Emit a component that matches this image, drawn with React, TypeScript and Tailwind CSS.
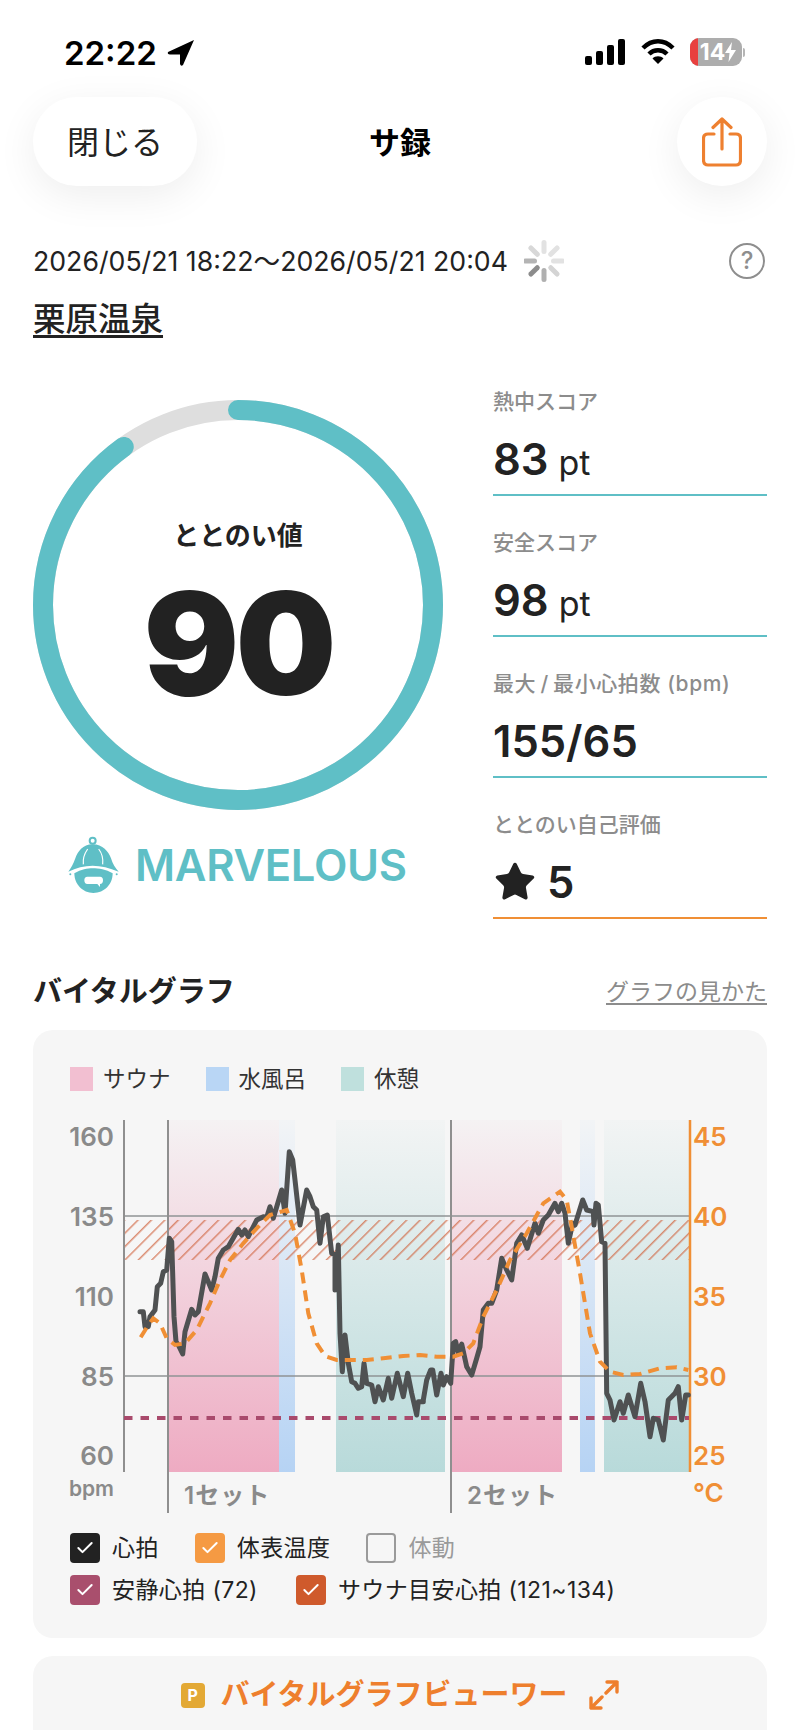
import { Check, Star } from 'lucide-react';

const FONT = "font-['Inter','Noto_Sans_CJK_JP',sans-serif]";
const TEAL = '#5fbfc6';

// traced from the graph, in 3x units relative to (50,1100) and (420,1100)
const HR_A = '270,635 280,635 285,680 295,680 300,650 315,630 322,560 332,550 340,515 350,510 358,415 365,425 372,650 378,725 385,735 398,762 405,695 425,628 435,645 445,635 465,522 485,570 495,530 505,475 520,450 535,440 565,388 575,405 585,390 595,410 620,360 640,350 650,352 660,320 670,355 695,270 705,340 718,155 728,180 735,240 750,375 770,270 780,290 790,320 800,330 810,430 820,350 832,345 845,460 855,465 855,570 865,435 870,700 877,815 885,705 895,790 905,845 915,850 925,865 935,860 942,790 950,850 965,855 975,905 985,860 1000,900 1015,835 1025,895 1042,820 1060,890 1073,820 1085,880 1100,945 1105,905 1120,905';
const HR_B = '10,900 20,840 32,810 38,810 50,885 63,820 70,855 80,830 92,850 100,730 107,725 115,760 125,732 140,800 155,825 170,775 180,740 190,630 205,610 215,610 230,570 245,475 260,510 275,540 290,430 305,405 322,445 345,370 355,400 370,360 385,345 405,310 415,335 425,310 435,340 445,430 458,370 465,375 488,300 500,330 520,335 522,375 528,310 535,315 545,425 555,430 560,880 570,900 582,960 600,905 610,940 625,885 645,950 662,850 675,905 690,1010 700,955 715,960 730,1020 745,900 765,880 775,860 785,960 797,885 805,885';
const TEMP_A = '272,712 295,675 310,655 330,670 350,715 375,735 405,730 440,690 480,610 510,540 540,480 580,430 620,385 660,345 710,330 735,400 755,510 775,640 800,730 825,768 860,780 900,780 950,780 1000,775 1060,768 1110,765';
const TEMP_B = '50,770 100,770 130,760 160,730 190,650 230,570 270,480 320,400 370,310 420,275 440,300 455,380 480,520 510,700 540,785 570,815 610,825 660,822 720,805 770,802 805,810';

function toPage(a: string, b: string) {
  const conv = (s: string, ox: number) =>
    s.split(' ').map((p) => {
      const [x, y] = p.split(',').map(Number);
      return `${(ox + x / 3).toFixed(1)},${(1100 + y / 3).toFixed(1)}`;
    });
  return [...conv(a, 50), ...conv(b, 420)].join(' ');
}

function StatusBar() {
  return (
    <div className="flex h-[97px] items-start justify-between pl-[64px] pr-[55px] pt-[33px]">
      <div className="flex items-center gap-[10px]">
        <span className="text-[33px] leading-[40px] font-semibold text-black">22:22</span>
        <svg width="28" height="28" viewBox="0 0 28 28">
          <path d="M27 1 L1 13 Q0 15 3 15.500 L13 15.500 L13 25 Q14 28 16 26 Z" fill="#000" />
        </svg>
      </div>
      <div className="mt-[5px] flex items-center">
        <svg width="40" height="26" viewBox="0 0 40 26" fill="#000">
          <rect x="0" y="17" width="7" height="9" rx="2" />
          <rect x="11" y="12" width="7" height="14" rx="2" />
          <rect x="22" y="6" width="7" height="20" rx="2" />
          <rect x="33" y="0" width="7" height="26" rx="2" />
        </svg>
        <svg className="ml-[16px]" width="34" height="26" viewBox="0 0 34 26" fill="none" stroke="#000" strokeWidth="4.500">
          <path d="M2 9 C11 0 23 0 32 9" />
          <path d="M8 15 C13 10 21 10 26 15" />
          <path d="M17 25 L11.500 19.500 C14 16.500 20 16.500 22.500 19.500 Z" fill="#000" stroke="none" />
        </svg>
        <div className="ml-[15px] flex items-center">
          <div className="relative flex h-[28px] w-[52px] items-center justify-center overflow-hidden rounded-[9px] bg-[#adadad]">
            <div className="absolute top-0 bottom-0 left-0 w-[8px] bg-[#e8403f]" />
            <span className="relative pl-[4px] text-[23px] leading-none font-bold text-white">14</span>
            <svg className="relative" width="11" height="20" viewBox="0 0 11 20" fill="#fff">
              <path d="M7 0 L0 11 L4.500 11 L3.500 20 L11 8 L6 8 Z" />
            </svg>
          </div>
          <div className="ml-[1px] h-[9px] w-[2px] rounded-r-sm bg-[#b5b5b5]" />
        </div>
      </div>
    </div>
  );
}

function Header() {
  return (
    <div className="flex h-[89px] items-center px-[33px]">
      <div className="flex-1">
        <div className="flex h-[89px] w-[164px] items-center justify-center rounded-[44px] bg-white pt-[3px] text-[32px] text-[#222] shadow-[0_10px_40px_rgba(0,0,0,0.07)]">
          閉じる
        </div>
      </div>
      <div className="pt-[3px] text-[31px] font-bold text-black">サ録</div>
      <div className="flex flex-1 justify-end">
        <div className="flex h-[89px] w-[90px] items-center justify-center rounded-full bg-white shadow-[0_10px_40px_rgba(0,0,0,0.07)]">
          <svg width="40" height="50" viewBox="0 0 40 50" fill="none" stroke="#ee8030" strokeWidth="3.200" strokeLinecap="round" strokeLinejoin="round">
            <path d="M12 17 H6 Q1.500 17 1.500 21.500 V43 Q1.500 48 6 48 H34 Q38.500 48 38.500 43 V21.500 Q38.500 17 34 17 H28" />
            <path d="M20 32 V2 M11 10.500 L20 2 L29 10.500" />
          </svg>
        </div>
      </div>
    </div>
  );
}

function Spinner() {
  const shades = ['#e2e2e2', '#e2e2e2', '#e2e2e2', '#d4d4d4', '#b0b0b0', '#8c8c8c', '#b4b4b4', '#d8d8d8'];
  return (
    <svg width="40" height="42" viewBox="-20 -21 40 42">
      {shades.map((c, i) => (
        <rect key={i} x="-2.500" y="-21" width="5" height="14" rx="2.500" fill={c} transform={`rotate(${i * 45})`} />
      ))}
    </svg>
  );
}

function HatIcon() {
  return (
    <svg width="55" height="60" viewBox="20 30 165 180" fill={TEAL}>
      <circle cx="100" cy="47" r="9" fill="none" stroke={TEAL} strokeWidth="6" />
      <path d="M100 58 C70 58 55 80 48 100 C42 118 35 128 27 140 C50 128 75 122 100 122 C125 122 150 128 178 140 C168 128 160 118 155 100 C148 80 130 58 100 58 Z" />
      <path d="M72 118 C70 100 76 85 85 72 M130 118 C132 100 128 85 118 72" fill="none" stroke="#fff" strokeWidth="3.500" />
      <path d="M45 145 C65 133 85 130 100 130 C118 130 140 133 160 145 C160 178 135 204 102 204 C70 204 45 178 45 145 Z" />
      <circle cx="33" cy="148" r="3" />
      <circle cx="172" cy="148" r="3" />
      <path d="M84 155 H122 Q131 155 131 166 Q131 177 122 177 L122 186 L114 177 H84 Q75 177 75 166 Q75 155 84 155 Z" fill="#fff" />
    </svg>
  );
}

function Ring() {
  const r = 195;
  const c = 2 * Math.PI * r;
  return (
    <div className="relative h-[410px] w-[410px]">
      <svg width="410" height="410" viewBox="0 0 410 410" className="-rotate-90">
        <circle cx="205" cy="205" r={r} fill="none" stroke="#dedede" strokeWidth="20" />
        <circle cx="205" cy="205" r={r} fill="none" stroke={TEAL} strokeWidth="20" strokeLinecap="round" strokeDasharray={`${c * 0.9} ${c}`} />
      </svg>
      <div className="absolute inset-0 flex flex-col items-center">
        <div className="mt-[118px] text-[26px] leading-[36px] font-bold text-[#222]">ととのい値</div>
        <div className="mt-[4px] text-[142px] leading-[170px] font-black tracking-[-4px] text-[#222]">90</div>
      </div>
    </div>
  );
}

function Stat({ label, rule, children }: { label: React.ReactNode; rule: string; children: React.ReactNode }) {
  return (
    <div className={`h-[141px] border-b-2 ${rule}`}>
      <div className="pt-[34px] text-[21px] leading-[26px] font-medium text-[#8c8c8c]">{label}</div>
      <div className="mt-[19px] flex h-[50px] items-baseline text-[#222]">{children}</div>
    </div>
  );
}

function Legend({ color, label }: { color: string; label: string }) {
  return (
    <div className="flex items-center gap-[10px]">
      <span className={`h-[24px] w-[23px] ${color}`} />
      <span className="text-[22.500px] leading-[30px] text-[#333]">{label}</span>
    </div>
  );
}

function CheckRow({ color, label, muted }: { color?: string; label: string; muted?: boolean }) {
  return (
    <div className="flex items-center gap-[12px]">
      {color ? (
        <span className={`flex h-[30px] w-[30px] items-center justify-center rounded-[4px] ${color}`}>
          <Check size={20} strokeWidth={2.4} color="#fff" />
        </span>
      ) : (
        <span className="h-[30px] w-[30px] rounded-[4px] border-2 border-[#9a9a9a]" />
      )}
      <span className={`text-[23px] leading-[30px] tracking-[0.4px] ${muted ? 'text-[#9a9a9a]' : 'text-[#222]'}`}>{label}</span>
    </div>
  );
}

function Chart() {
  const bands = [
    { x: 169, w: 110, g: 'url(#sauna)' },
    { x: 279, w: 16, g: 'url(#water)' },
    { x: 336, w: 109, g: 'url(#rest)' },
    { x: 452, w: 110, g: 'url(#sauna)' },
    { x: 580, w: 15, g: 'url(#water)' },
    { x: 604, w: 85, g: 'url(#rest)' },
  ];
  const leftTicks = [['160', 1146], ['135', 1226], ['110', 1306], ['85', 1386], ['60', 1465]];
  const rightTicks = [['45', 1146], ['40', 1226], ['35', 1306], ['30', 1386], ['25', 1465]];
  return (
    <svg width="680" height="400" viewBox="60 1115 680 400" className="block">
      <defs>
        <linearGradient id="sauna" x1="0" y1="0" x2="0" y2="1">
          <stop offset="0" stopColor="#f5f2f3" />
          <stop offset="1" stopColor="#eeabc2" />
        </linearGradient>
        <linearGradient id="water" x1="0" y1="0" x2="0" y2="1">
          <stop offset="0" stopColor="#f2f4f6" />
          <stop offset="1" stopColor="#b6d3f4" />
        </linearGradient>
        <linearGradient id="rest" x1="0" y1="0" x2="0" y2="1">
          <stop offset="0" stopColor="#f2f4f4" />
          <stop offset="1" stopColor="#b8dada" />
        </linearGradient>
        <pattern id="hatch" width="9.500" height="9.500" patternUnits="userSpaceOnUse" patternTransform="rotate(45)">
          <rect x="0" y="0" width="1.500" height="9.500" fill="#d0623c" fillOpacity="0.7" />
        </pattern>
      </defs>
      {bands.map((b, i) => (
        <rect key={i} x={b.x} y="1120" width={b.w} height="352" fill={b.g} />
      ))}
      <rect x="124" y="1220" width="565" height="40" fill="url(#hatch)" />
      <line x1="125" y1="1216" x2="689" y2="1216" stroke="#8f9394" strokeWidth="1.500" />
      <line x1="125" y1="1376" x2="689" y2="1376" stroke="#8f9394" strokeWidth="1.500" />
      <line x1="124" y1="1120" x2="124" y2="1472" stroke="#8f8f8f" strokeWidth="2" />
      <line x1="168" y1="1120" x2="168" y2="1513" stroke="#8f8f8f" strokeWidth="2" />
      <line x1="451" y1="1120" x2="451" y2="1513" stroke="#8f8f8f" strokeWidth="2" />
      <line x1="690" y1="1120" x2="690" y2="1472" stroke="#f08f35" strokeWidth="2.500" />
      <line x1="124" y1="1418" x2="689" y2="1418" stroke="#a94a6c" strokeWidth="4" strokeDasharray="8.500 8" />
      <polyline points={toPage(HR_A, HR_B)} fill="none" stroke="#4f5152" strokeWidth="5" strokeLinejoin="round" strokeLinecap="round" />
      <polyline points={toPage(TEMP_A, TEMP_B)} fill="none" stroke="#f08f35" strokeWidth="4" strokeDasharray="11 7" />
      <g fontSize="26" fontWeight="600" fill="#8a8a8a" textAnchor="end">
        {leftTicks.map(([t, y]) => (
          <text key={t} x="114" y={y}>{t}</text>
        ))}
        <text x="114" y="1496" fontSize="21">bpm</text>
      </g>
      <g fontSize="26" fontWeight="600" fill="#f08f35">
        {rightTicks.map(([t, y]) => (
          <text key={t} x="693" y={y}>{t}</text>
        ))}
        <text x="693" y="1502">°C</text>
      </g>
      <g fontSize="24" fontWeight="600" fill="#8a8a8a" letterSpacing="1">
        <text x="184" y="1504">1セット</text>
        <text x="467" y="1504">2セット</text>
      </g>
    </svg>
  );
}

export default function App() {
  return (
    <div className={`h-[1730px] w-[800px] overflow-hidden bg-white ${FONT}`}>
      <StatusBar />
      <Header />
      <div className="mt-[55px] flex h-[40px] items-center justify-between pr-[35px] pl-[33px]">
        <div className="flex items-center gap-[16px]">
          <span className="text-[26.700px] leading-[40px] text-[#222]">2026/05/21 18:22～2026/05/21 20:04</span>
          <Spinner />
        </div>
        <div className="flex h-[36px] w-[36px] items-center justify-center rounded-full border-[2.500px] border-[#8e8e8e] text-[24px] leading-none font-medium text-[#8e8e8e]">?</div>
      </div>
      <div className="mt-[17px] px-[33px] text-[32.500px] leading-[44px] font-medium text-[#222] underline underline-offset-[4px]">栗原温泉</div>

      <div className="mt-[11px] flex justify-between px-[33px]">
        <div className="w-[410px]">
          <div className="mt-[47px]"><Ring /></div>
          <div className="mt-[25px] ml-[33px] flex items-center gap-[14px]">
            <HatIcon />
            <span className="text-[43.500px] leading-[60px] font-semibold tracking-[-0.3px] text-[#5fbfc6]">MARVELOUS</span>
          </div>
        </div>
        <div className="mt-[2px] w-[274px]">
          <Stat label="熱中スコア" rule="border-[#5fbfc6]">
            <span className="text-[43.500px] leading-[50px] font-semibold">83</span>
            <span className="ml-[10px] text-[34px]">pt</span>
          </Stat>
          <Stat label="安全スコア" rule="border-[#5fbfc6]">
            <span className="text-[43.500px] leading-[50px] font-semibold">98</span>
            <span className="ml-[10px] text-[34px]">pt</span>
          </Stat>
          <Stat label={<span className="tracking-[0.6px]">最大&#8201;/&#8201;最小心拍数 (bpm)</span>} rule="border-[#5fbfc6]">
            <span className="text-[43.500px] leading-[50px] font-semibold">155/65</span>
          </Stat>
          <Stat label="ととのい自己評価" rule="border-[#f08f35]">
            <Star size={44} fill="#222" strokeWidth={1} className="mr-[10px] self-center" />
            <span className="text-[43.500px] leading-[50px] font-semibold">5</span>
          </Stat>
        </div>
      </div>

      <div className="mt-[53px] flex h-[40px] items-center justify-between px-[33px]">
        <span className="text-[29px] font-bold text-[#222]">バイタルグラフ</span>
        <span className="text-[23px] text-[#8c8c8c] underline underline-offset-[3px]">グラフの見かた</span>
      </div>

      <div className="mx-[33px] mt-[18px] h-[608px] rounded-[20px] bg-[#f6f6f6] pt-[34px]">
        <div className="flex gap-[35px] pl-[37px]">
          <Legend color="bg-[#f2bfd1]" label="サウナ" />
          <Legend color="bg-[#b9d6f5]" label="水風呂" />
          <Legend color="bg-[#bfe0dd]" label="休憩" />
        </div>
        <div className="mt-[21px] ml-[27px]"><Chart /></div>
        <div className="mt-[18px] flex flex-col gap-[12px] pl-[37px]">
          <div className="flex gap-[36px]">
            <CheckRow color="bg-[#222]" label="心拍" />
            <CheckRow color="bg-[#f59a43]" label="体表温度" />
            <CheckRow label="体動" muted />
          </div>
          <div className="flex gap-[38px]">
            <CheckRow color="bg-[#a94f6d]" label="安静心拍 (72)" />
            <CheckRow color="bg-[#cf5a2c]" label="サウナ目安心拍 (121~134)" />
          </div>
        </div>
      </div>

      <div className="mx-[33px] mt-[18px] flex h-[120px] justify-center rounded-t-[20px] bg-[#f6f6f6] pt-[24px]">
        <div className="flex h-[30px] items-center">
          <span className="flex h-[25px] w-[24px] items-center justify-center rounded-[4px] bg-[#e3a935] text-[16px] font-bold text-white">P</span>
          <span className="ml-[16px] text-[29px] font-bold text-[#ee7f2d]">バイタルグラフビューワー</span>
          <svg className="ml-[22px]" width="30" height="30" viewBox="0 0 30 30" fill="none" stroke="#ee7f2d" strokeWidth="3.400" strokeLinecap="round" strokeLinejoin="round">
            <path d="M18 2 H28 V12 M28 2 L17 13 M2 18 V28 H12 M2 28 L13 17" />
          </svg>
        </div>
      </div>
    </div>
  );
}
